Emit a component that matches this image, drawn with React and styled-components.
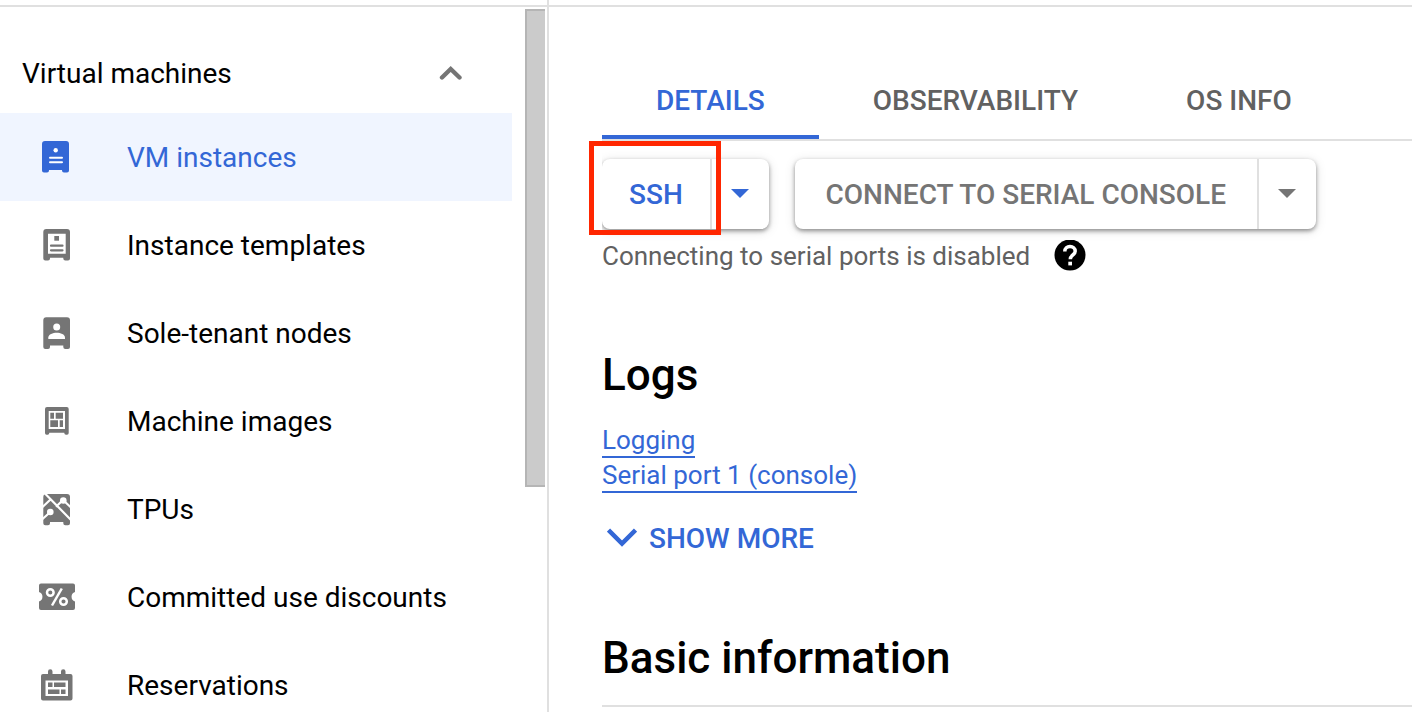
import React from 'react';
import styled, { createGlobalStyle } from 'styled-components';

const Global = createGlobalStyle`
  * { box-sizing: border-box; }
  body { margin: 0; background: #fff; color: #000; font-family: Roboto, sans-serif; font-size: 28px; }
  button { font: inherit; color: inherit; background: none; border: 0; padding: 0; cursor: pointer; }
  a { text-decoration: none; }
`;

const Page = styled.div`
  display: grid;
  grid-template-columns: 549px minmax(0, 1fr);
  height: 100vh;
  overflow: hidden;
`;

const TopEdge = styled.div`
  height: 7px;
  flex: none;
  border-bottom: 2px solid #e0e0e0;
`;

const Sidebar = styled.aside`
  display: flex;
  flex-direction: column;
  min-height: 0;
  border-right: 2px solid #e0e0e0;
`;

const SidebarBody = styled.div`
  display: flex;
  justify-content: space-between;
  flex: 1;
  min-height: 0;
  overflow: hidden;
  padding-right: 2px;
`;

const Nav = styled.nav`
  width: 512px;
  padding-top: 26px;
`;

const SectionToggle = styled.button`
  display: flex;
  align-items: center;
  justify-content: space-between;
  width: 100%;
  height: 80px;
  padding: 0 49px 0 22px;
`;

const NavList = styled.ul`
  list-style: none;
  margin: 0;
  padding: 0;
`;

const NavLink = styled.a`
  display: flex;
  align-items: center;
  gap: 51px;
  height: 88px;
  padding-left: 36px;
  color: ${(p) => (p.$active ? '#3367d6' : '#000')};
  background: ${(p) => (p.$active ? '#f0f5ff' : 'transparent')};
`;

const NavIcon = styled.svg`
  width: 40px;
  height: 40px;
  flex: none;
  fill: ${(p) => (p.$active ? '#3367d6' : '#757575')};
`;

const ScrollThumb = styled.div`
  width: 20px;
  height: 478px;
  margin-top: 2px;
  background: #cbcbcb;
  border: 2px solid #b5b5b5;
  border-right: 0;
`;

const Main = styled.main`
  display: flex;
  flex-direction: column;
  min-width: 0;
`;

const Content = styled.div`
  padding-left: 53px;
`;

const Tabs = styled.div`
  display: flex;
  margin-top: 54px;
  border-bottom: 2px solid #e0e0e0;
`;

const Tab = styled.button`
  height: 78px;
  padding: 0 54px;
  font-weight: 500;
  color: ${(p) => (p.$active ? '#3367d6' : '#616161')};
  border-top: 4px solid transparent;
  border-bottom: 4px solid ${(p) => (p.$active ? '#3367d6' : 'transparent')};
`;

const ActionArea = styled.div`
  position: relative;
  padding-top: 18px;
`;

const Actions = styled.div`
  display: flex;
  gap: 26px;
  clip-path: inset(-20px -20px -20px 0);
`;

const SplitButton = styled.div`
  display: flex;
  height: 70px;
  border-radius: 8px;
  background: #fff;
  color: ${(p) => (p.$muted ? '#757575' : '#3367d6')};
  box-shadow: 0 2px 4px rgba(0, 0, 0, 0.4), 0 2px 12px rgba(0, 0, 0, 0.12);
`;

const SplitMain = styled.button`
  min-width: ${(p) => (p.$wide ? '464px' : '0')};
  padding: 0 27px;
  font-weight: 500;
  border-right: 2px solid #e0e0e0;
`;

const SplitCaret = styled.button`
  display: flex;
  align-items: center;
  justify-content: center;
  width: 57px;
`;

const Highlight = styled.div`
  position: absolute;
  left: -13px;
  top: 0;
  width: 132px;
  height: 94px;
  border: 5px solid #ff2600;
  pointer-events: none;
`;

const Note = styled.div`
  display: flex;
  align-items: center;
  gap: 24px;
  height: 54px;
  font-size: 26px;
  color: #616161;
`;

const HelpButton = styled.button`
  display: flex;
`;

const Heading = styled.h2`
  margin: ${(p) => (p.$ruled ? '76px 0 0' : '66px 0 0')};
  padding-bottom: ${(p) => (p.$ruled ? '21px' : '24px')};
  border-bottom: ${(p) => (p.$ruled ? '2px solid #e0e0e0' : '0')};
  font-size: 44px;
  line-height: 52px;
  font-weight: 500;
`;

const Links = styled.div`
  display: flex;
  flex-direction: column;
  align-items: flex-start;
  gap: 2px;
`;

const LogLink = styled.a`
  font-size: 26px;
  line-height: 31px;
  color: #3367d6;
  border-bottom: 2px solid #3367d6;
`;

const ShowMore = styled.button`
  display: flex;
  align-items: center;
  gap: 12px;
  height: 36px;
  margin-top: 27px;
  padding-left: 5px;
  font-weight: 500;
  color: #3367d6;
`;

const icons = {
  vm: (
    <>
      <path d="M9 4h21a3 3 0 0 1 3 3v26.500a2 2 0 0 1-2 2h-3a2 2 0 0 1-2-2V33H13v.5a2 2 0 0 1-2 2H8a2 2 0 0 1-2-2V7a3 3 0 0 1 3-3z" />
      <circle cx="19.700" cy="13.300" r="2.200" fill="#fff" />
      <path d="M14 20.700h12M14 25.300h12" stroke="#fff" strokeWidth="2" strokeLinecap="round" />
    </>
  ),
  template: (
    <>
      <path fillRule="evenodd" d="M10.300 4H31a3 3 0 0 1 3 3v26.500a2 2 0 0 1-2 2h-2.700a2 2 0 0 1-2-2v-.8H14v.8a2 2 0 0 1-2 2H9.300a2 2 0 0 1-2-2V7a3 3 0 0 1 3-3zM12 8.700v20h17.700v-20z" />
      <path d="M18.300 11H23v4.700h-4.700z" />
      <path d="M15 20.700h11.500M15 25.300h11.500" stroke="#757575" strokeWidth="2.200" strokeLinecap="round" />
    </>
  ),
  node: (
    <>
      <path d="M10.300 4.300H31a3 3 0 0 1 3 3V34a2 2 0 0 1-2 2h-2.700a2 2 0 0 1-2-2v-1.500H14V34a2 2 0 0 1-2 2H9.300a2 2 0 0 1-2-2V7.300a3 3 0 0 1 3-3z" />
      <circle cx="20.700" cy="14" r="3.500" fill="#fff" />
      <path d="M12.300 26v-1.500c0-3.200 4.700-4.800 8.400-4.800s8.300 1.600 8.300 4.800V26z" fill="#fff" />
    </>
  ),
  image: (
    <>
      <path fillRule="evenodd" d="M11 6h19.700a2 2 0 0 1 2 2v24a1.700 1.700 0 0 1-1.700 1.700h-1a1.700 1.700 0 0 1-1.700-1.700v-.3h-15v.3a1.700 1.700 0 0 1-1.700 1.700h-1A1.700 1.700 0 0 1 9 32V8a2 2 0 0 1 2-2zm1.700 4v18H29V10z" />
      <path d="M14.300 11.700H18v6h-3.700zM19.700 11.700H27v6h-7.300zM14.300 19.300H22V26h-7.700zM23.700 19.300H27V26h-3.300z" />
    </>
  ),
  tpu: (
    <>
      <path d="M10.300 5H31a3 3 0 0 1 3 3v26.300a2 2 0 0 1-2 2h-2.700a2 2 0 0 1-2-2V33H14v1.300a2 2 0 0 1-2 2H9.300a2 2 0 0 1-2-2V8a3 3 0 0 1 3-3z" />
      <path d="M8 3.500l27.500 28M6 30.500l8.300-7.500M6 18.500l8.500-8M20 17.800l7-6.800 8 7.500" fill="none" stroke="#fff" strokeWidth="2.200" />
      <circle cx="14.300" cy="23" r="3.300" fill="#fff" />
      <circle cx="27.300" cy="11.500" r="3.300" fill="#fff" />
    </>
  ),
  discount: (
    <>
      <path d="M5 6.500h32a2 2 0 0 1 2 2v6.500a5 5 0 0 0 0 9.500v6.500a2 2 0 0 1-2 2H5a2 2 0 0 1-2-2v-6.500a5 5 0 0 0 0-9.500v-6.500a2 2 0 0 1 2-2z" />
      <path d="M25.800 11.500l-9.800 17" stroke="#fff" strokeWidth="2.500" />
      <circle cx="14.300" cy="15.500" r="3.300" fill="none" stroke="#fff" strokeWidth="2.500" />
      <circle cx="27.500" cy="24.500" r="3.300" fill="none" stroke="#fff" strokeWidth="2.500" />
    </>
  ),
  reservation: (
    <>
      <path fillRule="evenodd" d="M7 9h5V6.500a2 2 0 0 1 4.500 0V9H25V6.500a2 2 0 0 1 4.500 0V9h5a2 2 0 0 1 2 2v22.500a2 2 0 0 1-2 2H7a2 2 0 0 1-2-2V11a2 2 0 0 1 2-2zm2.500 6.500v15.500H32V15.500z" />
      <path d="M12 17.500h4.500V22H12zM18 17.500h11.500V22H18zM12 24.500h11.500V29H12zM25 24.500h4.500V29H25z" />
    </>
  ),
};

const navItems = [
  ['vm', 'VM instances'],
  ['template', 'Instance templates'],
  ['node', 'Sole-tenant nodes'],
  ['image', 'Machine images'],
  ['tpu', 'TPUs'],
  ['discount', 'Committed use discounts'],
  ['reservation', 'Reservations'],
];

const Caret = () => (
  <svg width="18" height="10" viewBox="0 0 18 10" fill="currentColor" aria-hidden="true">
    <path d="M0 0h18L9 9z" />
  </svg>
);

export default function App() {
  return (
    <Page>
      <Global />
      <Sidebar>
        <TopEdge />
        <SidebarBody>
          <Nav>
            <SectionToggle aria-expanded="true">
              Virtual machines
              <svg width="24" height="16" viewBox="0 0 24 16" fill="none" stroke="#757575" strokeWidth="4.400" strokeLinecap="round" aria-hidden="true">
                <path d="M3 12.500L11.700 4l8.800 8.500" />
              </svg>
            </SectionToggle>
            <NavList>
              {navItems.map(([icon, label], i) => (
                <li key={icon}>
                  <NavLink href="#" $active={i === 0}>
                    <NavIcon $active={i === 0} viewBox="0 0 40 40" aria-hidden="true">{icons[icon]}</NavIcon>
                    {label}
                  </NavLink>
                </li>
              ))}
            </NavList>
          </Nav>
          <ScrollThumb />
        </SidebarBody>
      </Sidebar>
      <Main>
        <TopEdge />
        <Content>
          <Tabs role="tablist">
            <Tab role="tab" aria-selected="true" $active>DETAILS</Tab>
            <Tab role="tab" aria-selected="false">OBSERVABILITY</Tab>
            <Tab role="tab" aria-selected="false">OS INFO</Tab>
          </Tabs>
          <ActionArea>
            <Actions>
              <SplitButton>
                <SplitMain>SSH</SplitMain>
                <SplitCaret aria-label="SSH options"><Caret /></SplitCaret>
              </SplitButton>
              <SplitButton $muted>
                <SplitMain $wide>CONNECT TO SERIAL CONSOLE</SplitMain>
                <SplitCaret aria-label="Serial console options"><Caret /></SplitCaret>
              </SplitButton>
            </Actions>
            <Highlight />
          </ActionArea>
          <Note>
            Connecting to serial ports is disabled
            <HelpButton aria-label="Help">
              <svg width="32" height="32" viewBox="0 0 32 32" aria-hidden="true">
                <circle cx="16" cy="15" r="15.500" fill="#000" />
                <path d="M10.800 11.500c0-3.200 2.300-5 5.200-5s5.200 1.800 5.200 4.700c0 3.600-4.900 3.900-4.900 8" fill="none" stroke="#fff" strokeWidth="3.500" />
                <path d="M14.300 21.700h3.700v3.700h-3.700z" fill="#fff" />
              </svg>
            </HelpButton>
          </Note>
          <Heading>Logs</Heading>
          <Links>
            <LogLink href="#">Logging</LogLink>
            <LogLink href="#">Serial port 1 (console)</LogLink>
          </Links>
          <ShowMore>
            <svg width="30" height="20" viewBox="0 0 30 20" fill="none" stroke="currentColor" strokeWidth="4.500" aria-hidden="true">
              <path d="M1.500 2L15 15.500 28.500 2" />
            </svg>
            SHOW MORE
          </ShowMore>
          <Heading $ruled>Basic information</Heading>
        </Content>
      </Main>
    </Page>
  );
}
